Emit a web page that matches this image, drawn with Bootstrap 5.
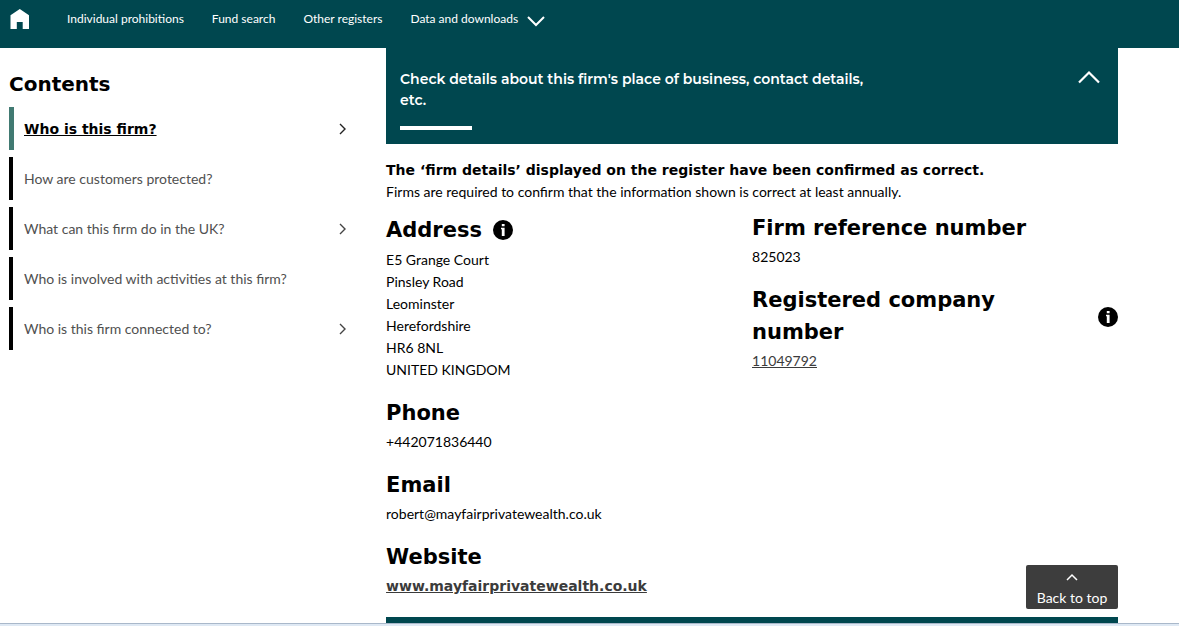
<!DOCTYPE html>
<html lang="en">
<head>
<meta charset="utf-8">
<meta name="viewport" content="width=device-width, initial-scale=1">
<title>Firm details</title>
<link href="https://cdn.jsdelivr.net/npm/bootstrap@5.3.0/dist/css/bootstrap.min.css" rel="stylesheet">
<style>
  :root { --teal: #00474f; --ink: #3b3b3b; }
  body { font-family: Lato, "Liberation Sans", sans-serif; font-size: 14px; line-height: 22px; color: #000; }
  h2, .strong-text { font-family: Verdana, "DejaVu Sans", sans-serif; font-weight: 700; }
  h2 { font-size: 21px; line-height: 32px; margin: 0 0 2px; }
  address { line-height: 22px; }
  svg { display: block; flex: none; }
  .top-nav { background: var(--teal); height: 48px; padding: 8px 10px 0; }
  .top-nav .nav-link { color: #fff; font-size: 12px; line-height: 22px; padding: 0; }
  .menu-links { gap: 28px; margin-left: 37px; }
  .page-body { padding: 0 61px 0 9px; }
  .side-col { width: 34%; padding: 24px 31px 0 0; }
  .side-col h2 { font-size: 20px; line-height: 24px; margin-bottom: 11px; }
  .side-list { gap: 7px; }
  .side-list .nav-link { min-height: 43px; padding: 0 0 0 11px; border-left: 4px solid #000; color: #505050; }
  .side-list .nav-link.active { border-left: 5px solid #417a72; padding-left: 10px; color: #000; text-decoration: underline; }
  .main-col { width: 66%; }
  .band { background: var(--teal); color: #fff; border: 0; padding: 21px 16px 14px 14px; font-family: Montserrat, Inter, sans-serif; font-size: 14px; font-weight: 600; line-height: 21px; }
  .band-text { max-width: 480px; }
  .band-rule { width: 72px; height: 4px; background: #fff; margin-top: 15px; }
  .intro { padding: 16px 0 10px; line-height: 21px; }
  .info-btn { background: none; border: 0; padding: 0; }
  .address-head { min-height: 36px; gap: 11px; margin-bottom: 1px; }
  .address-head h2 { margin: 0; }
  .field { margin-bottom: 16px; }
  .field a { color: var(--ink); }
  .next-band { background: var(--teal); height: 6px; margin-top: 4px; }
  .to-top { right: 61px; bottom: 17px; width: 92px; height: 44px; background: #3d3d3d; color: #fff; border: 0; border-radius: 2px; padding: 0 0 1px; gap: 6px; line-height: 20px; }
  .status-strip { height: 3px; background: #dfe9f4; border-top: 1px solid #a9b8ca; }
</style>
</head>
<body class="min-vh-100 d-flex flex-column">
<nav class="top-nav d-flex align-items-start">
  <a href="#" aria-label="Home"><svg width="20" height="22" viewBox="0 0 20 22"><path fill="#fff" d="M9.8 1 19 7.3V21h-6.3v-7H6.8v7H.5V7.3z"/></svg></a>
  <div class="nav menu-links">
    <a class="nav-link" href="#">Individual prohibitions</a>
    <a class="nav-link" href="#">Fund search</a>
    <a class="nav-link" href="#">Other registers</a>
    <a class="nav-link d-flex align-items-center" href="#">Data and downloads<svg class="ms-2 mt-1" width="20" height="12" viewBox="0 0 20 12"><path d="m2 2 8 8 8-8" fill="none" stroke="#fff" stroke-width="2"/></svg></a>
  </div>
</nav>
<div class="page-body d-flex align-items-start">
  <aside class="side-col">
    <h2>Contents</h2>
    <nav class="nav flex-column side-list">
      <a class="nav-link active strong-text d-flex align-items-center justify-content-between" href="#">Who is this firm?<svg width="24" height="14" viewBox="0 0 24 14"><path d="m9 2 5 5-5 5" fill="none" stroke="#222" stroke-width="1.4"/></svg></a>
      <a class="nav-link d-flex align-items-center" href="#">How are customers protected?</a>
      <a class="nav-link d-flex align-items-center justify-content-between" href="#">What can this firm do in the UK?<svg width="24" height="14" viewBox="0 0 24 14"><path d="m9 2 5 5-5 5" fill="none" stroke="#444" stroke-width="1.4"/></svg></a>
      <a class="nav-link d-flex align-items-center" href="#">Who is involved with activities at this firm?</a>
      <a class="nav-link d-flex align-items-center justify-content-between" href="#">Who is this firm connected to?<svg width="24" height="14" viewBox="0 0 24 14"><path d="m9 2 5 5-5 5" fill="none" stroke="#444" stroke-width="1.4"/></svg></a>
    </nav>
  </aside>
  <main class="main-col">
    <button class="band w-100 text-start d-flex align-items-start justify-content-between" type="button" aria-expanded="true">
      <span class="d-block"><span class="d-block band-text">Check details about this firm's place of business, contact details, etc.</span><span class="d-block band-rule"></span></span>
      <svg width="26" height="18" viewBox="0 0 26 18"><path d="M3 13.500 13 3.500l10 10" fill="none" stroke="#fff" stroke-width="2.200"/></svg>
    </button>
    <div class="intro">
      <p class="strong-text m-0">The ‘firm details’ displayed on the register have been confirmed as correct.</p>
      <p class="m-0">Firms are required to confirm that the information shown is correct at least annually.</p>
    </div>
    <div class="row g-0">
      <div class="col-6">
        <section class="field">
          <div class="address-head d-flex align-items-center">
            <h2>Address</h2>
            <button class="info-btn" type="button" aria-label="About the address"><svg width="20" height="20" viewBox="0 0 20 20"><circle cx="10" cy="10" r="10"/><path fill="#fff" d="M8.800 4h2.800v2.300H8.800zM8 7.700h3.600V16H8.800V9.200H8z"/></svg></button>
          </div>
          <address class="m-0">E5 Grange Court<br>Pinsley Road<br>Leominster<br>Herefordshire<br>HR6 8NL<br>UNITED KINGDOM</address>
        </section>
        <section class="field"><h2>Phone</h2><p class="m-0">+442071836440</p></section>
        <section class="field"><h2>Email</h2><p class="m-0">robert@mayfairprivatewealth.co.uk</p></section>
        <section class="field"><h2>Website</h2><p class="m-0"><a class="strong-text" href="#">www.mayfairprivatewealth.co.uk</a></p></section>
      </div>
      <div class="col-6">
        <section class="field"><h2>Firm reference number</h2><p class="m-0">825023</p></section>
        <section class="field">
          <div class="d-flex align-items-center justify-content-between">
            <h2 class="pe-5">Registered company number</h2>
            <button class="info-btn" type="button" aria-label="About the registered company number"><svg width="20" height="20" viewBox="0 0 20 20"><circle cx="10" cy="10" r="10"/><path fill="#fff" d="M8.800 4h2.800v2.300H8.800zM8 7.700h3.600V16H8.800V9.200H8z"/></svg></button>
          </div>
          <p class="m-0"><a href="#">11049792</a></p>
        </section>
      </div>
    </div>
    <div class="next-band"></div>
  </main>
</div>
<button class="to-top position-fixed d-flex flex-column align-items-center justify-content-end" type="button"><svg width="14" height="10" viewBox="0 0 14 10"><path d="m2 8 5-5 5 5" fill="none" stroke="#fff" stroke-width="1.500"/></svg><span>Back to top</span></button>
<footer class="status-strip mt-auto"></footer>
<script src="https://cdn.jsdelivr.net/npm/bootstrap@5.3.0/dist/js/bootstrap.bundle.min.js"></script>
</body>
</html>
